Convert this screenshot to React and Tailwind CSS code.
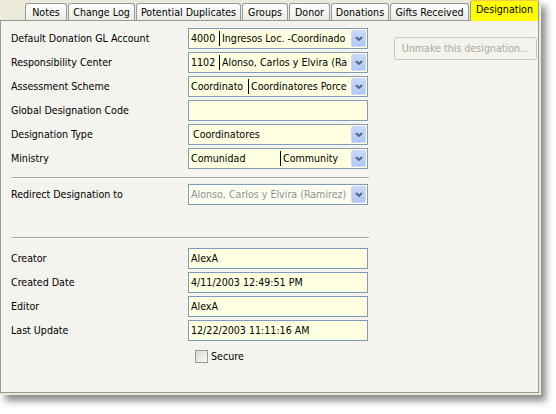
const tabs = [
  { label: 'Notes', w: 'w-[42px]' },
  { label: 'Change Log', w: 'w-[67px]' },
  { label: 'Potential Duplicates', w: 'w-[105px]' },
  { label: 'Groups', w: 'w-[46px]' },
  { label: 'Donor', w: 'w-[41px]' },
  { label: 'Donations', w: 'w-[58px]' },
  { label: 'Gifts Received', w: 'w-[79px]' },
];

function Chevron() {
  return (
    <span className="absolute right-px top-px bottom-px w-[15px] flex items-center justify-center rounded-[2px] border border-[#c9d7fa] bg-gradient-to-b from-[#cbd8f8] to-[#b3c6f3]">
      <svg width="8" height="5" viewBox="0 0 8 5">
        <path d="M1 1 L4 4 L7 1" fill="none" stroke="#4d6185" strokeWidth="1.8" />
      </svg>
    </span>
  );
}

function Box({ children, combo, disabled }) {
  return (
    <div
      className={`relative w-[180px] h-[21px] border border-[#7f9db9] flex items-center ${
        disabled ? 'bg-[#fdfdf0] text-[#8f9296]' : 'bg-[#ffffe1] text-black'
      }`}
    >
      <div className={`flex items-center pl-[2px] whitespace-nowrap overflow-hidden ${combo ? 'w-[161px]' : 'w-full'}`}>
        {children}
      </div>
      {combo && <Chevron />}
    </div>
  );
}

function Cols({ a, b, w }) {
  return (
    <>
      <span className={`${w} shrink-0`}>{a}</span>
      <span className="w-px h-[15px] bg-black shrink-0 mr-[2px]" />
      <span>{b}</span>
    </>
  );
}

function Row({ label, children }) {
  return (
    <div className="flex items-center h-[21px]">
      <span className="w-[177px] pt-px">{label}</span>
      {children}
    </div>
  );
}

function Sep() {
  return <div className="ml-[1px] w-[357px] h-[2px] border-t border-[#aca899] border-b border-b-white" />;
}

export default function App() {
  return (
    <div className="min-h-screen bg-white font-['DejaVu_Sans_Condensed','Liberation_Sans',sans-serif] text-[10.6px] text-black">
      <div className="w-[541px] h-[395px] bg-[#ece9d8] flex flex-col shadow-[5px_6px_7px_rgba(0,0,0,0.45)]">
        {/* Tabs */}
        <div className="h-[20px] flex items-end gap-[1px] pl-[25px] relative z-10">
          {tabs.map((t) => (
            <div
              key={t.label}
              className={`${t.w} h-[17px] border border-b-0 border-[#919b9c] rounded-t-[3px] bg-gradient-to-b from-white to-[#ecebe5] flex items-center justify-center whitespace-nowrap pt-px`}
            >
              {t.label}
            </div>
          ))}
          <div className="w-[69px] h-[21px] -mb-px border-x border-t border-[#919b9c] border-t-[#f5c74a] rounded-t-[3px] bg-[#ffff00] flex items-center justify-center pb-[2px]">
            Designation
          </div>
        </div>

        {/* Panel */}
        <div className="w-[539px] h-[373px] border border-[#919b9c] bg-[#f4f3ee] pl-[10px] pt-[7px] flex">
          <div className="flex flex-col w-[358px]">
            <div className="flex flex-col gap-[3px]">
              <Row label="Default Donation GL Account">
                <Box combo>
                  <Cols a="4000" b="Ingresos Loc. -Coordinado" w="w-[28px]" />
                </Box>
              </Row>
              <Row label="Responsibility Center">
                <Box combo>
                  <Cols a="1102" b="Alonso, Carlos y Elvira (Ra" w="w-[28px]" />
                </Box>
              </Row>
              <Row label="Assessment Scheme">
                <Box combo>
                  <Cols a="Coordinato" b="Coordinatores Porce" w="w-[57px]" />
                </Box>
              </Row>
              <Row label="Global Designation Code">
                <Box />
              </Row>
              <Row label="Designation Type">
                <Box combo>
                  <span className="pl-[2px]">Coordinatores</span>
                </Box>
              </Row>
              <Row label="Ministry">
                <Box combo>
                  <Cols a="Comunidad" b="Community" w="w-[89px]" />
                </Box>
              </Row>
            </div>

            <div className="mt-[8px]">
              <Sep />
            </div>
            <div className="mt-[5px]">
              <Row label="Redirect Designation to">
                <Box combo disabled>
                  Alonso, Carlos y Elvira (Ramirez)
                </Box>
              </Row>
            </div>

            <div className="mt-[32px]">
              <Sep />
            </div>
            <div className="mt-[9px] flex flex-col gap-[3px]">
              <Row label="Creator">
                <Box>AlexA</Box>
              </Row>
              <Row label="Created Date">
                <Box>4/11/2003 12:49:51 PM</Box>
              </Row>
              <Row label="Editor">
                <Box>AlexA</Box>
              </Row>
              <Row label="Last Update">
                <Box>12/22/2003 11:11:16 AM</Box>
              </Row>
            </div>

            <label className="mt-[9px] ml-[184px] flex items-center gap-[3px] h-[13px]">
              <span className="w-[13px] h-[13px] border border-[#9a9a94] bg-gradient-to-br from-[#dcdcd6] to-[#f8f8f4]" />
              <span>Secure</span>
            </label>
          </div>

          <div className="ml-[25px] mt-[9px]">
            <button className="w-[143px] h-[23px] border border-[#c9c7ba] rounded-[3px] text-[#aca899] bg-[#f4f3ee] text-[10.6px] whitespace-nowrap">
              Unmake this designation...
            </button>
          </div>
        </div>
      </div>
    </div>
  );
}
